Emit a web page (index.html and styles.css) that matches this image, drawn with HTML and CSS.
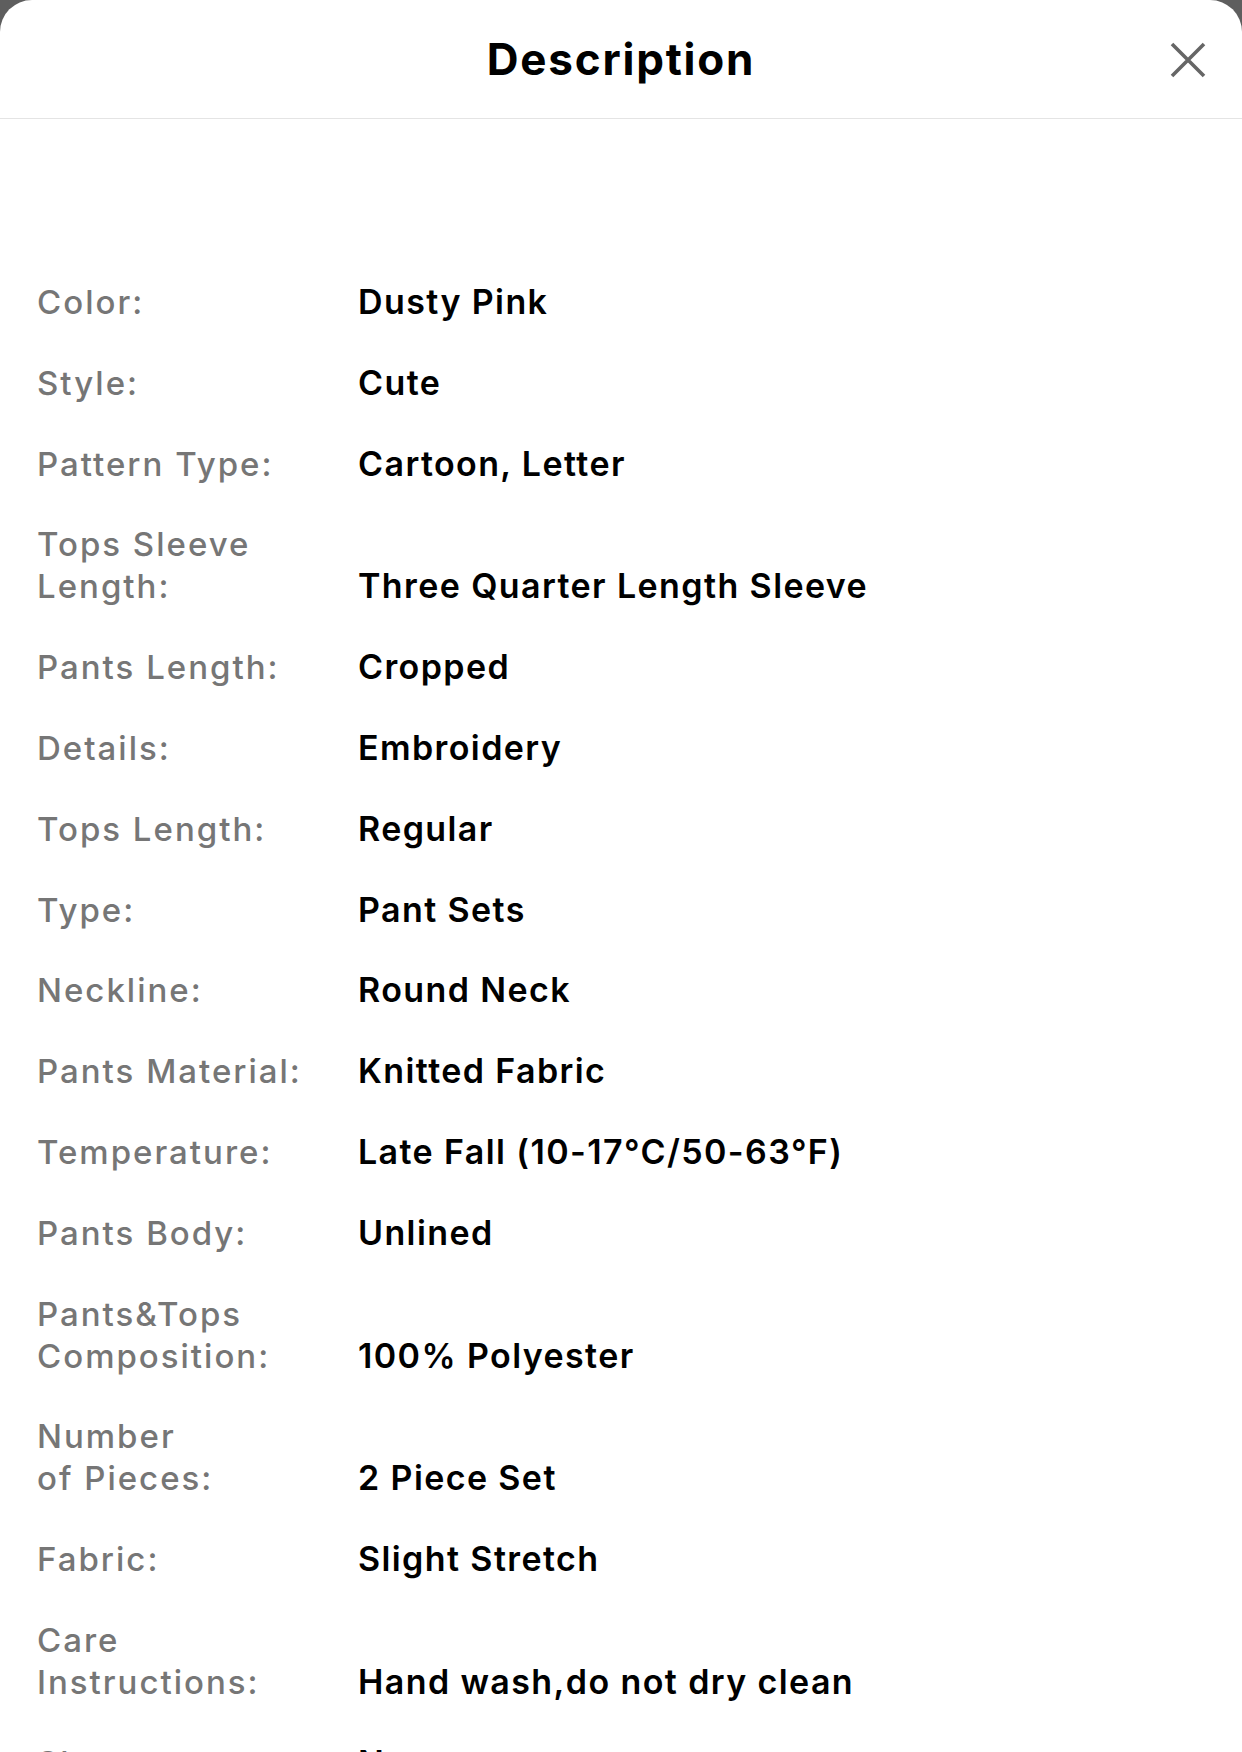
FILE: index.html
```html
<!DOCTYPE html>
<html lang="en">
<head>
<meta charset="utf-8">
<title>Description</title>
<link rel="stylesheet" href="styles.css">
</head>
<body>
<div class="sheet">
  <header class="header">
    <div class="spacer"></div>
    <h1 class="title">Description</h1>
    <button class="close" aria-label="Close">
      <svg width="36" height="36" viewBox="0 0 36 36"><path d="M2 2 L34 34 M34 2 L2 34" stroke="#666" stroke-width="3.6" stroke-linecap="butt" fill="none"/></svg>
    </button>
  </header>
  <dl class="specs">
    <div class="row"><dt>Color:</dt><dd>Dusty Pink</dd></div>
    <div class="row"><dt>Style:</dt><dd>Cute</dd></div>
    <div class="row"><dt>Pattern Type:</dt><dd>Cartoon, Letter</dd></div>
    <div class="row"><dt>Tops Sleeve<br>Length:</dt><dd>Three Quarter Length Sleeve</dd></div>
    <div class="row"><dt>Pants Length:</dt><dd>Cropped</dd></div>
    <div class="row"><dt>Details:</dt><dd>Embroidery</dd></div>
    <div class="row"><dt>Tops Length:</dt><dd>Regular</dd></div>
    <div class="row"><dt>Type:</dt><dd>Pant Sets</dd></div>
    <div class="row"><dt>Neckline:</dt><dd>Round Neck</dd></div>
    <div class="row"><dt>Pants Material:</dt><dd>Knitted Fabric</dd></div>
    <div class="row"><dt>Temperature:</dt><dd>Late Fall (10-17°C/50-63°F)</dd></div>
    <div class="row"><dt>Pants Body:</dt><dd>Unlined</dd></div>
    <div class="row"><dt>Pants&amp;Tops<br>Composition:</dt><dd>100% Polyester</dd></div>
    <div class="row"><dt>Number<br>of Pieces:</dt><dd>2 Piece Set</dd></div>
    <div class="row"><dt>Fabric:</dt><dd>Slight Stretch</dd></div>
    <div class="row"><dt>Care<br>Instructions:</dt><dd>Hand wash,do not dry clean</dd></div>
    <div class="row"><dt>Sheer:</dt><dd>No</dd></div>
  </dl>
</div>
</body>
</html>
```

FILE: styles.css
```css
html, body {
  margin: 0;
  padding: 0;
}
body {
  background: #5e5e5e;
  font-family: Inter, "Noto Sans", "Liberation Sans", sans-serif;
  width: 1242px;
  height: 1752px;
  overflow: hidden;
}
.sheet {
  background: #ffffff;
  border-radius: 32px 32px 0 0;
  min-height: 1752px;
  overflow: hidden;
}
.header {
  height: 118px;
  border-bottom: 1px solid #e4e4e4;
  display: grid;
  grid-template-columns: 1fr auto 1fr;
  align-items: center;
}
.title {
  margin: 0;
  padding-top: 0;
  font-size: 44px;
  font-weight: 700;
  color: #000;
  letter-spacing: 1.8px;
}
.close {
  justify-self: end;
  margin-right: 36px;
  margin-top: 2px;
  background: none;
  border: 0;
  padding: 0;
  width: 36px;
  height: 36px;
  display: flex;
}
.specs {
  margin: 0;
  padding: 162px 0 0 37px;
  display: flex;
  flex-direction: column;
  gap: 38.8px;
}
.row {
  display: grid;
  grid-template-columns: 321px 1fr;
  align-items: end;
}
.row dt {
  font-size: 33px;
  line-height: 42px;
  font-weight: 500;
  color: #767676;
  letter-spacing: 2px;
}
.row dd {
  margin: 0;
  font-size: 34px;
  line-height: 42px;
  font-weight: 600;
  color: #000;
  letter-spacing: 1.4px;
}
```
